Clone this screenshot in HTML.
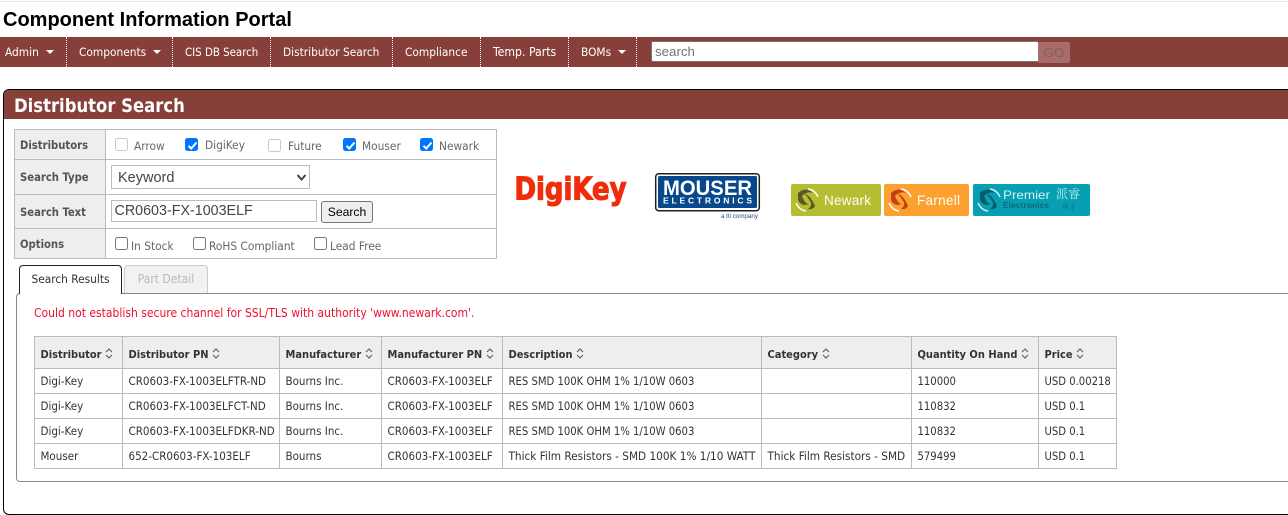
<!DOCTYPE html>
<html><head><meta charset="utf-8"><style>
html,body{margin:0;padding:0;background:#fff;width:1288px;height:515px;overflow:hidden}
body{position:relative;font-family:"DejaVu Sans Condensed","DejaVu Sans",sans-serif;font-stretch:condensed;font-size:11.5px;color:#333}
.a{position:absolute;white-space:nowrap}
.nav{color:#fff;top:45px;line-height:15px;font-size:11.8px}
.sep{position:absolute;top:37px;height:30px;border-left:1px dotted #fff}
.caret{display:inline-block;border:4px solid transparent;border-top:4px solid #fff;border-bottom:0;margin-left:7px;vertical-align:2px}
.lab{font-weight:bold;color:#555;font-size:11.2px;font-stretch:condensed}
.cb{position:absolute;width:13px;height:13px;box-sizing:border-box;border:1px solid #767676;border-radius:2.5px;background:#fff}
.cb.dis{border-color:#c9c9c9}
.cb.on{background:#0075ff;border-color:#0075ff}
.cb.on svg{position:absolute;left:0;top:0}
.opt{color:#666;font-size:11.8px}
table{position:absolute;left:34px;top:336px;border-collapse:collapse;table-layout:fixed;width:1083px;font-size:11.5px;color:#333}
td,th{border:1px solid #bbb;padding:0 0 0 5.5px;white-space:nowrap;overflow:hidden;text-align:left;height:24px;box-sizing:border-box}
th{height:32px;background:#eee;color:#333;font-weight:bold;font-size:11px;padding-top:3px}
th svg{vertical-align:-1px;margin-left:0}
.n{font-size:11.2px}
.w{font-size:11.7px}
</style></head><body>
<div class="a" style="left:0;top:1px;width:1288px;height:1px;background:#e5e5e5"></div>
<div class="a" style="left:3px;top:8px;font:bold 20px/24px 'Liberation Sans',sans-serif;color:#000">Component Information Portal</div>
<div class="a" style="left:0;top:37px;width:1288px;height:30px;background:#873f3a"></div>
<div class="a nav" style="left:5px">Admin<span class="caret"></span></div>
<div class="a nav" style="left:79px">Components<span class="caret"></span></div>
<div class="a nav" style="left:185px;font-size:11.4px">CIS DB Search</div>
<div class="a nav" style="left:283px">Distributor Search</div>
<div class="a nav" style="left:405px">Compliance</div>
<div class="a nav" style="left:493px;font-size:12.2px">Temp. Parts</div>
<div class="a nav" style="left:581px">BOMs<span class="caret"></span></div>
<div class="sep" style="left:66px"></div><div class="sep" style="left:172px"></div><div class="sep" style="left:270px"></div><div class="sep" style="left:392px"></div><div class="sep" style="left:480px"></div><div class="sep" style="left:568px"></div><div class="sep" style="left:636px"></div>
<div class="a" style="left:651px;top:41px;width:387px;height:21px;box-sizing:border-box;background:#fff;border:1px solid #767676;border-right:0;border-radius:2px 0 0 2px;font:13.3px/19px 'Liberation Sans',sans-serif;color:#757575;padding-left:3px">search</div>
<div class="a" style="left:1038px;top:42px;width:32px;height:21px;box-sizing:border-box;background:#a96c67;border:1px solid #9b7370;border-radius:2px;font:13.3px/19px 'Liberation Sans',sans-serif;color:#7c6268;text-align:center">GO</div>

<div class="a" style="left:3px;top:89px;width:1300px;height:426px;box-sizing:border-box;border:1px solid #000;border-radius:6px;overflow:hidden">
<div style="height:29px;background:#873f3a"></div></div>
<div class="a" style="left:14px;top:95px;font-size:18.3px;line-height:24px;font-weight:bold;color:#fff">Distributor Search</div>

<div class="a" style="left:14px;top:129px;width:483px;height:130px;box-sizing:border-box;border:1px solid #bbb"></div>
<div class="a" style="left:15px;top:130px;width:90px;height:128px;background:#eee"></div>
<div class="a" style="left:105px;top:130px;width:1px;height:128px;background:#bbb"></div>
<div class="a" style="left:15px;top:159px;width:481px;height:1px;background:#bbb"></div>
<div class="a" style="left:15px;top:194px;width:481px;height:1px;background:#bbb"></div>
<div class="a" style="left:15px;top:228px;width:481px;height:1px;background:#bbb"></div>
<div class="a lab" style="left:20px;top:139px">Distributors</div>
<div class="a lab" style="left:20px;top:171px">Search Type</div>
<div class="a lab" style="left:20px;top:206px">Search Text</div>
<div class="a lab" style="left:20px;top:238px">Options</div>

<div class="cb dis" style="left:115px;top:138px"></div><div class="a opt" style="left:134px;top:139px">Arrow</div>
<div class="cb on" style="left:185px;top:138px"><svg width="13" height="13" viewBox="0 0 13 13"><path d="M2.5 6.8 5.2 9.5 10.5 3.5" fill="none" stroke="#fff" stroke-width="2"/></svg></div><div class="a opt" style="left:205px;top:138px">DigiKey</div>
<div class="cb dis" style="left:268px;top:139px"></div><div class="a opt" style="left:288px;top:139px">Future</div>
<div class="cb on" style="left:343px;top:138px"><svg width="13" height="13" viewBox="0 0 13 13"><path d="M2.5 6.8 5.2 9.5 10.5 3.5" fill="none" stroke="#fff" stroke-width="2"/></svg></div><div class="a opt" style="left:362px;top:139px">Mouser</div>
<div class="cb on" style="left:420px;top:138px"><svg width="13" height="13" viewBox="0 0 13 13"><path d="M2.5 6.8 5.2 9.5 10.5 3.5" fill="none" stroke="#fff" stroke-width="2"/></svg></div><div class="a opt" style="left:439px;top:139px">Newark</div>

<div class="a" style="left:111px;top:165px;width:199px;height:24px;box-sizing:border-box;border:1px solid #bbb;font:14.5px/24px 'Liberation Sans',sans-serif;color:#444;padding-left:6px;background:#fff">Keyword<svg style="position:absolute;left:184px;top:7px" width="11" height="9" viewBox="0 0 11 9"><path d="M1.5 2 5.5 6.5 9.5 2" fill="none" stroke="#444" stroke-width="2"/></svg></div>
<div class="a" style="left:111px;top:200px;width:206px;height:22px;box-sizing:border-box;border:1px solid #bbb;font:14.3px/20px 'Liberation Sans',sans-serif;color:#444;padding-left:2.5px;background:#fff">CR0603-FX-1003ELF</div>
<div class="a" style="left:321px;top:201px;width:52px;height:22px;box-sizing:border-box;border:1px solid #767676;border-radius:3px;background:#efefef;font:12.2px/20px 'Liberation Sans',sans-serif;color:#000;text-align:center">Search</div>

<div class="cb" style="left:115px;top:237px"></div><div class="a opt" style="left:131px;top:239px">In Stock</div>
<div class="cb" style="left:193px;top:237px"></div><div class="a opt" style="left:209px;top:239px">RoHS Compliant</div>
<div class="cb" style="left:314px;top:237px"></div><div class="a opt" style="left:330px;top:239px">Lead Free</div>

<!-- logos -->
<svg class="a" style="left:510px;top:170px" width="125" height="45" viewBox="0 0 125 45"><text x="4.5" y="29.5" font-family="DejaVu Sans" font-weight="bold" font-size="31" fill="#f02c0a" stroke="#f02c0a" stroke-width="1.1" textLength="112" lengthAdjust="spacingAndGlyphs">DigiKey</text></svg>
<svg class="a" style="left:652px;top:168px" width="112" height="54" viewBox="0 0 112 54">
<rect x="3.7" y="5.7" width="103.6" height="37" rx="3" fill="#fff" stroke="#222" stroke-width="1.5"/>
<rect x="6" y="8" width="99" height="32" rx="1.5" fill="#07478c"/>
<text x="11" y="27" font-family="Liberation Sans" font-weight="bold" font-size="21" fill="#fff" textLength="89" lengthAdjust="spacingAndGlyphs">MOUSER</text>
<text x="11" y="35.5" font-family="Liberation Sans" font-weight="bold" font-size="8.5" fill="#fff" textLength="89">ELECTRONICS</text>
<text x="69" y="50" font-family="Liberation Sans" font-size="6.5" fill="#1f4f86" textLength="37" lengthAdjust="spacingAndGlyphs">a tti company</text></svg>
<svg class="a" style="left:790px;top:183px" width="302" height="34" viewBox="0 0 302 34">
<rect x="1" y="1" width="90" height="32" rx="2" fill="#b5bd30"/>
<path d="M8 10q8-7 15 0q-6-2-11 3q3 8 7 8q-8 3-11-4zM14 10q7 3 11 13q-2 4-7 3q5-4 2-8q-3-5-6-8z" fill="#5a5a24"/><path d="M6 20q3 7 10 8M18 6q7 1 10 8" fill="none" stroke="#fff" stroke-width="1.5"/>
<text x="34" y="22" font-family="Liberation Sans" font-size="13.5" fill="#fff" textLength="47">Newark</text>
<rect x="94" y="1" width="85" height="32" rx="2" fill="#fca02f"/>
<path d="M101 10q8-7 15 0q-6-2-11 3q3 8 7 8q-8 3-11-4zM107 10q7 3 11 13q-2 4-7 3q5-4 2-8q-3-5-6-8z" fill="#c23f18"/><path d="M99 20q3 7 10 8M111 6q7 1 10 8" fill="none" stroke="#fff" stroke-width="1.5"/>
<text x="127" y="22" font-family="Liberation Sans" font-size="13.5" fill="#fff" textLength="43">Farnell</text>
<rect x="183" y="1" width="117" height="32" rx="2" fill="#06a0b2"/>
<path d="M190 10q8-7 15 0q-6-2-11 3q3 8 7 8q-8 3-11-4zM196 10q7 3 11 13q-2 4-7 3q5-4 2-8q-3-5-6-8z" fill="#0b5a6c"/><path d="M188 20q3 7 10 8M200 6q7 1 10 8" fill="none" stroke="#cfeef2" stroke-width="1.5"/>
<text x="213" y="16" font-family="Liberation Sans" font-size="12" fill="#d6f2f5" textLength="47" lengthAdjust="spacingAndGlyphs">Premier</text>
<text x="213" y="25" font-family="Liberation Sans" font-size="8" font-weight="bold" fill="#0d6474" textLength="46">Electronics</text>
<text x="266" y="15" font-family="Noto Serif CJK SC,serif" font-size="12" fill="#bfe8ed">派睿</text>
<text x="272" y="26" font-family="Noto Serif CJK SC,serif" font-size="7" fill="#0d6474">电子</text>
</svg>

<!-- tabs -->
<div class="a" style="left:16px;top:293px;width:1290px;height:189px;box-sizing:border-box;border:1px solid #888;border-radius:4px"></div>
<div class="a" style="left:124px;top:265px;width:84px;height:28px;box-sizing:border-box;border:1px solid #ccc;border-bottom:0;border-radius:4px 4px 0 0;background:#f2f2f2;color:#bbb;text-align:center;line-height:26px;font-size:12px">Part Detail</div>
<div class="a" style="left:19px;top:265px;width:103px;height:29px;box-sizing:border-box;border:1px solid #222;border-bottom:0;border-radius:4px 4px 0 0;background:#fff;color:#333;text-align:center;line-height:26px;font-size:11.8px">Search Results</div>
<div class="a" style="left:34px;top:306px;color:#f01030;font-size:12px">Could not establish secure channel for SSL/TLS with authority 'www.newark.com'.</div>

<table>
<colgroup><col style="width:88px"><col style="width:157px"><col style="width:102px"><col style="width:121px"><col style="width:259px"><col style="width:150px"><col style="width:127px"><col style="width:78px"></colgroup>
<tr>
<th>Distributor <svg width="8" height="11" viewBox="0 0 8 11"><path d="M1 4 4 1 7 4M1 7 4 10 7 7" fill="none" stroke="#555"/></svg></th>
<th>Distributor PN <svg width="8" height="11" viewBox="0 0 8 11"><path d="M1 4 4 1 7 4M1 7 4 10 7 7" fill="none" stroke="#555"/></svg></th>
<th>Manufacturer <svg width="8" height="11" viewBox="0 0 8 11"><path d="M1 4 4 1 7 4M1 7 4 10 7 7" fill="none" stroke="#555"/></svg></th>
<th>Manufacturer PN <svg width="8" height="11" viewBox="0 0 8 11"><path d="M1 4 4 1 7 4M1 7 4 10 7 7" fill="none" stroke="#555"/></svg></th>
<th>Description <svg width="8" height="11" viewBox="0 0 8 11"><path d="M1 4 4 1 7 4M1 7 4 10 7 7" fill="none" stroke="#555"/></svg></th>
<th>Category <svg width="8" height="11" viewBox="0 0 8 11"><path d="M1 4 4 1 7 4M1 7 4 10 7 7" fill="none" stroke="#555"/></svg></th>
<th>Quantity On Hand <svg width="8" height="11" viewBox="0 0 8 11"><path d="M1 4 4 1 7 4M1 7 4 10 7 7" fill="none" stroke="#555"/></svg></th>
<th>Price <svg width="8" height="11" viewBox="0 0 8 11"><path d="M1 4 4 1 7 4M1 7 4 10 7 7" fill="none" stroke="#555"/></svg></th>
</tr>
<tr style="height:25px"><td>Digi-Key</td><td>CR0603-FX-1003ELFTR-ND</td><td>Bourns Inc.</td><td>CR0603-FX-1003ELF</td><td class="n">RES SMD 100K OHM 1% 1/10W 0603</td><td></td><td class="n">110000</td><td class="n">USD 0.00218</td></tr>
<tr style="height:25px"><td>Digi-Key</td><td>CR0603-FX-1003ELFCT-ND</td><td>Bourns Inc.</td><td>CR0603-FX-1003ELF</td><td class="n">RES SMD 100K OHM 1% 1/10W 0603</td><td></td><td class="n">110832</td><td class="n">USD 0.1</td></tr>
<tr style="height:25px"><td>Digi-Key</td><td>CR0603-FX-1003ELFDKR-ND</td><td>Bourns Inc.</td><td>CR0603-FX-1003ELF</td><td class="n">RES SMD 100K OHM 1% 1/10W 0603</td><td></td><td class="n">110832</td><td class="n">USD 0.1</td></tr>
<tr style="height:25px"><td>Mouser</td><td>652-CR0603-FX-103ELF</td><td>Bourns</td><td>CR0603-FX-1003ELF</td><td class="w">Thick Film Resistors - SMD 100K 1% 1/10 WATT</td><td class="w">Thick Film Resistors - SMD</td><td class="n">579499</td><td class="n">USD 0.1</td></tr>
</table>
</body></html>
